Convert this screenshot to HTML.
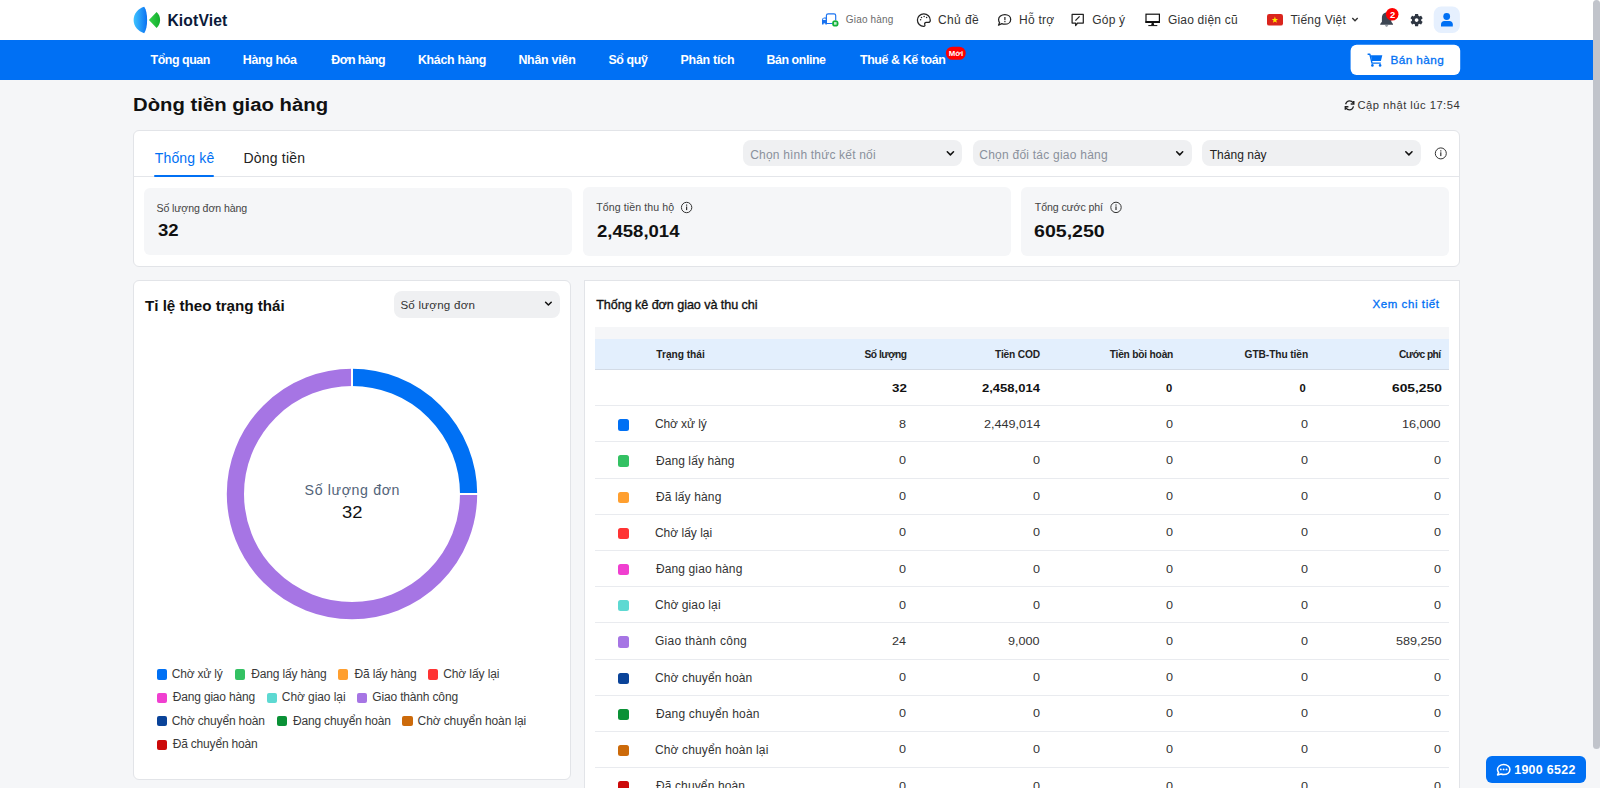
<!DOCTYPE html>
<html><head><meta charset="utf-8"><title>Dòng tiền giao hàng</title>
<style>
html{margin:0;padding:0;width:1600px;height:788px;overflow:hidden;background:#f5f6f8}
body{margin:0;padding:0}
body{width:1600px;height:788px;overflow:hidden;position:relative;background:#f5f6f8;font-family:"Liberation Sans",sans-serif}
.b{position:absolute;box-sizing:border-box}
.t{position:absolute;white-space:nowrap;line-height:40px;font-family:"Liberation Sans",sans-serif}
svg{position:absolute;overflow:visible}
</style></head><body><div style="position:absolute;left:0;top:0;width:1600px;height:788px;overflow:hidden">
<!-- header -->
<div class="b" style="left:0;top:0;width:1600px;height:40px;background:#fff"></div>
<div class="b" style="left:0;top:40px;width:1600px;height:40px;background:#0070f4"></div>
<svg style="left:0;top:0" width="1600" height="80" viewBox="0 0 1600 80">
  <defs>
    <linearGradient id="lg1" x1="0" y1="0" x2="1" y2="0"><stop offset="0" stop-color="#3ec3ff"/><stop offset="1" stop-color="#0a72f2"/></linearGradient>
    <linearGradient id="lg2" x1="0" y1="0" x2="1" y2="0"><stop offset="0" stop-color="#35d34a"/><stop offset="1" stop-color="#12ad2c"/></linearGradient>
  </defs>
  <path d="M144.2,6.8 C138,8.6 133.6,13.8 133.6,20 C133.6,26.2 138,31.4 144.2,33.2 C146.3,30.2 147.1,25.3 147.1,20 C147.1,14.7 146.3,9.8 144.2,6.8 Z" fill="url(#lg1)"/>
  <path d="M148.9,20 L156.6,12.1 C158.9,14.1 160.1,16.9 160.1,20 C160.1,23.1 158.9,25.9 156.6,27.9 Z" fill="url(#lg2)"/>
  <!-- truck -->
  <path d="M826.4,23.5 L826.4,15.6 Q826.4,13.9 828.2,13.9 L834,13.9 Q835.7,13.9 835.7,15.6 L835.7,20.3 M826.4,23.5 L832.2,23.5" fill="none" stroke="#1a73f0" stroke-width="1.15" stroke-linejoin="round"/>
  <path d="M826.9,17.5 L824.2,17.5 Q822,17.7 822,19.9 L822,24.4 L826.9,24.4 Z" fill="#1a73f0"/>
  <rect x="823.1" y="18.6" width="2.6" height="1.4" rx="0.5" fill="#fff"/>
  <circle cx="824.4" cy="24.3" r="1.05" fill="#fff"/>
  <circle cx="835.3" cy="23.4" r="3.2" fill="#14b13a"/>
  <rect x="834" y="22.1" width="2.6" height="2.6" fill="#c6f0cf"/>
  <!-- palette -->
  <path d="M923.8,13.9 C920.2,13.9 917.4,16.7 917.4,20.1 C917.4,23.6 920.2,26.3 923.6,26.3 C925,26.3 925.2,25.4 924.8,24.6 C924.3,23.5 924.9,22.4 926.1,22.4 L928.2,22.4 C929.5,22.4 930.3,21.5 930.3,20.2 C930.3,16.7 927.4,13.9 923.8,13.9 Z" fill="none" stroke="#222" stroke-width="1.25"/>
  <circle cx="921.5" cy="17.4" r="0.75" fill="#222"/><circle cx="924.1" cy="16.5" r="0.75" fill="#222"/><circle cx="926.6" cy="17.4" r="0.75" fill="#222"/><circle cx="920.6" cy="19.8" r="0.75" fill="#222"/>
  <!-- chat ! -->
  <path d="M1004.9,14.6 C1008.2,14.6 1010.7,16.7 1010.7,19.4 C1010.7,22.1 1008.2,24.2 1004.9,24.2 C1003.7,24.2 1002.7,24 1001.8,23.6 L998.5,25.2 L999.6,22.6 C998.9,21.7 998.6,20.6 998.6,19.4 C998.6,16.7 1001.4,14.6 1004.9,14.6 Z" fill="none" stroke="#222" stroke-width="1.25" stroke-linejoin="round"/>
  <rect x="1004.3" y="17" width="1.2" height="3.2" fill="#222"/><rect x="1004.3" y="21" width="1.2" height="1.2" fill="#222"/>
  <!-- feedback -->
  <path d="M1072.1,14.4 L1083.3,14.4 L1083.3,23 L1077.6,23 L1075.6,25.6 L1075.6,23 L1072.1,23 Z" fill="none" stroke="#222" stroke-width="1.25" stroke-linejoin="round"/>
  <path d="M1075.4,20.6 L1079.6,16.4" stroke="#222" stroke-width="1.3"/>
  <!-- monitor -->
  <rect x="1146" y="14.2" width="13.4" height="8.2" fill="none" stroke="#111" stroke-width="1.2"/>
  <rect x="1145.5" y="21" width="14.4" height="1.8" fill="#111"/>
  <path d="M1151.8,22.6 L1153.6,22.6 L1154.2,25 L1151.2,25 Z" fill="#111"/>
  <rect x="1148.3" y="25" width="9" height="1.1" fill="#222"/>
  <!-- flag -->
  <rect x="1267" y="14.1" width="16" height="11.5" rx="2.2" fill="#da251d"/>
  <path d="M1274.9,16.6 L1275.7,19 L1278.1,19 L1276.2,20.5 L1276.9,22.8 L1274.9,21.4 L1272.9,22.8 L1273.6,20.5 L1271.7,19 L1274.1,19 Z" fill="#ffeb00"/>
  <path d="M1352.3,18 L1355,20.8 L1357.7,18" fill="none" stroke="#333" stroke-width="1.4"/>
  <!-- bell -->
  <path d="M1386.6,12.6 C1383.6,12.6 1381.9,15 1381.9,18 L1381.9,21.8 L1380.2,24 L1380.2,24.8 L1393,24.8 L1393,24 L1391.3,21.8 L1391.3,18 C1391.3,15 1389.6,12.6 1386.6,12.6 Z" fill="#3d4653"/>
  <path d="M1384.9,25.6 Q1386.6,27.6 1388.3,25.6 Z" fill="#3d4653"/>
  <circle cx="1392.2" cy="14.2" r="6.3" fill="#ff0000"/>
  <!-- gear -->
  <path transform="translate(1408.9,12.4) scale(0.642)" fill="#2e3642" d="M19.14,12.94c0.04-0.3,0.06-0.61,0.06-0.94c0-0.32-0.02-0.64-0.07-0.94l2.03-1.58c0.18-0.14,0.23-0.41,0.12-0.61 l-1.920-3.32c-0.12-0.22-0.37-0.29-0.59-0.22l-2.39,0.96c-0.5-0.38-1.03-0.7-1.62-0.94L14.4,2.81c-0.04-0.24-0.24-0.41-0.48-0.41 h-3.84c-0.24,0-0.43,0.17-0.47,0.41L9.25,5.35C8.66,5.59,8.12,5.920,7.63,6.29L5.24,5.33c-0.22-0.08-0.47,0-0.59,0.22L2.74,8.87 C2.62,9.08,2.66,9.34,2.86,9.48l2.03,1.58C4.84,11.36,4.8,11.69,4.8,12s0.02,0.64,0.07,0.94l-2.03,1.58 c-0.18,0.14-0.23,0.41-0.12,0.61l1.92,3.32c0.12,0.22,0.37,0.29,0.59,0.22l2.39-0.96c0.5,0.38,1.03,0.7,1.62,0.94l0.36,2.54 c0.05,0.24,0.24,0.41,0.48,0.41h3.84c0.24,0,0.44-0.17,0.47-0.41l0.36-2.54c0.59-0.24,1.13-0.56,1.62-0.94l2.39,0.96 c0.22,0.08,0.47,0,0.59-0.22l1.92-3.32c0.12-0.22,0.07-0.47-0.12-0.61L19.14,12.94z M12,14.9c-1.6,0-2.9-1.3-2.9-2.9 s1.3-2.9,2.9-2.9s2.9,1.3,2.9,2.9S13.6,14.9,12,14.9z"/>
  <!-- avatar -->
  <rect x="1433.7" y="6.6" width="26.2" height="26.3" rx="7.5" fill="#e6f0fe"/>
  <circle cx="1446.7" cy="16.5" r="3.4" fill="#0070f4"/>
  <path d="M1441,26.6 L1441,24.3 C1441,22.4 1442.4,21.1 1444.3,21.1 L1449.5,21.1 C1451.4,21.1 1452.8,22.4 1452.8,24.3 L1452.8,26.6 Z" fill="#0070f4"/>
  <!-- moi badge -->
  <rect x="945.9" y="46.7" width="19.8" height="13.1" rx="6.5" fill="#ff0000"/>
  <!-- ban hang button -->
  <rect x="1350.6" y="44.7" width="109.6" height="30.3" rx="6" fill="#fff"/>
  <path d="M1367.6,54.3 L1369.9,54.3 L1372,63.1 L1380.8,63.1" fill="none" stroke="#0070f4" stroke-width="1.4" stroke-linejoin="round"/>
  <path d="M1370.8,55.3 L1382.3,55.3 L1380.9,61.1 L1372,61.1 Z" fill="#0070f4"/>
  <circle cx="1372.4" cy="65.4" r="1.3" fill="#0070f4"/><circle cx="1380.1" cy="65.4" r="1.3" fill="#0070f4"/>
</svg>
<!-- scrollbar -->
<div class="b" style="left:1593px;top:0;width:7px;height:748.5px;background:#c1c4cb;border-radius:3.5px"></div>
<!-- refresh icon -->
<svg style="left:0;top:0" width="1600" height="788" viewBox="0 0 1600 788">
  <g fill="none" stroke="#222" stroke-width="1.3">
    <path d="M1345.6,104.3 C1346.2,102.2 1348,100.9 1349.6,100.9 C1351.3,100.9 1352.4,101.6 1353.2,102.8"/>
    <path d="M1353.5,106.4 C1352.9,108.5 1351.1,109.8 1349.5,109.8 C1347.8,109.8 1346.7,109.1 1345.9,107.9"/>
  </g>
  <path d="M1354.5,101 L1354.5,104.8 L1350.7,104.8 L1350.7,103.3 L1353,103.3 L1353,101 Z" fill="#222"/>
  <path d="M1344.6,109.7 L1344.6,105.9 L1348.4,105.9 L1348.4,107.4 L1346.1,107.4 L1346.1,109.7 Z" fill="#222"/>
</svg>
<!-- card 1 -->
<div class="b" style="left:133px;top:130px;width:1327px;height:136.5px;background:#fff;border:1px solid #e2e4e8;border-radius:6px"></div>
<div class="b" style="left:134px;top:176px;width:1325px;height:1px;background:#e4e6ea"></div>
<div class="b" style="left:153.6px;top:175px;width:60.2px;height:2px;background:#0070f4;border-radius:1px"></div>
<div class="b" style="left:743.2px;top:140.2px;width:218.9px;height:26.3px;background:#eff0f2;border-radius:8px"></div>
<div class="b" style="left:972.5px;top:140.2px;width:219.1px;height:26.3px;background:#eff0f2;border-radius:8px"></div>
<div class="b" style="left:1201.7px;top:140.2px;width:218.9px;height:26.3px;background:#eff0f2;border-radius:8px"></div>

<div class="b" style="left:144px;top:188.2px;width:428px;height:66.7px;background:#f5f6f8;border-radius:6px"></div>
<div class="b" style="left:582.6px;top:187px;width:428px;height:69px;background:#f5f6f8;border-radius:6px"></div>
<div class="b" style="left:1021.1px;top:187px;width:428px;height:69px;background:#f5f6f8;border-radius:6px"></div>
<!-- left panel -->
<div class="b" style="left:133.4px;top:280.3px;width:437.4px;height:500.2px;background:#fff;border:1px solid #e2e4e8;border-radius:6px"></div>
<div class="b" style="left:394.1px;top:291px;width:165.6px;height:26.6px;background:#eff0f2;border-radius:8px"></div>
<svg style="left:0;top:0" width="1600" height="788" viewBox="0 0 1600 788">
  <g fill="none" stroke-width="17.2">
    <path d="M352,377.4 A116.6,116.6 0 0 1 468.6,494" stroke="#0070f4"/>
    <path d="M468.6,494 A116.6,116.6 0 1 1 352,377.4" stroke="#a675e4"/>
  </g>
  <rect x="351" y="366" width="2" height="22" fill="#fff"/>
  <rect x="458" y="493" width="22" height="2" fill="#fff"/>
</svg>
<!-- right panel -->
<div class="b" style="left:584.2px;top:280.3px;width:875.6px;height:520px;background:#fff;border:1px solid #e2e4e8;border-radius:0"></div>
<div class="b" style="left:595px;top:327.2px;width:854px;height:12px;background:#f5f6f8"></div>
<div class="b" style="left:595px;top:339px;width:854px;height:31px;background:#e3effd;border-bottom:1px solid #d3dbe6"></div>
<div class="b" style="left:595px;top:405px;width:854px;height:1px;background:#e9ebef"></div>
<!-- hotline -->
<div class="b" style="left:1486px;top:756.3px;width:100px;height:26.7px;background:#0070f4;border-radius:6px"></div>
<svg style="left:0;top:0" width="1600" height="788" viewBox="0 0 1600 788">
  <path d="M1503.7,764.5 C1507.3,764.5 1509.9,766.8 1509.9,769.5 C1509.9,772.3 1507.3,774.5 1503.7,774.5 C1502.7,774.5 1501.8,774.3 1501,774 L1497.6,774.9 L1498.6,772.6 C1497.9,771.7 1497.5,770.6 1497.5,769.5 C1497.5,766.8 1500.2,764.5 1503.7,764.5 Z" fill="none" stroke="#fff" stroke-width="1.55" stroke-linejoin="round"/>
  <circle cx="1500.8" cy="769.4" r="0.95" fill="#fff"/><circle cx="1503.6" cy="769.4" r="0.95" fill="#fff"/><circle cx="1506.5" cy="769.4" r="0.95" fill="#fff"/>
</svg>

<!-- overlay icons -->
<svg style="left:0;top:0" width="1600" height="788" viewBox="0 0 1600 788">
  <g fill="none" stroke="#111" stroke-width="1.55" stroke-linecap="round" stroke-linejoin="round">
    <path d="M947.3,151.8 L950.4,154.9 L953.5,151.8"/>
    <path d="M1176.7,151.8 L1179.7,154.9 L1182.7,151.8"/>
    <path d="M1405.8,151.8 L1408.9,154.9 L1412,151.8"/>
    <path d="M545.6,302.2 L548.4,305 L551.2,302.2"/>
  </g>
  <g fill="none" stroke="#333" stroke-width="1">
    <circle cx="1440.8" cy="153.4" r="5.5"/>
    <circle cx="686.6" cy="207.5" r="5.2"/>
    <circle cx="1116" cy="207.4" r="5.2"/>
  </g>
  <g fill="#333">
    <rect x="1440.2" y="152.3" width="1.2" height="3.8"/><rect x="1440.2" y="150.3" width="1.2" height="1.2"/>
    <rect x="686" y="206.5" width="1.2" height="3.6"/><rect x="686" y="204.5" width="1.2" height="1.2"/>
    <rect x="1115.4" y="206.4" width="1.2" height="3.6"/><rect x="1115.4" y="204.4" width="1.2" height="1.2"/>
  </g>
</svg>

<div class="b" style="left:156.5px;top:669.4px;width:10.3px;height:10.3px;background:#0070f4;border-radius:2px"></div><div class="b" style="left:235px;top:669.4px;width:10.3px;height:10.3px;background:#33c163;border-radius:2px"></div><div class="b" style="left:338.1px;top:669.4px;width:10.3px;height:10.3px;background:#ff9f2f;border-radius:2px"></div><div class="b" style="left:427.8px;top:669.4px;width:10.3px;height:10.3px;background:#ff3333;border-radius:2px"></div><div class="b" style="left:156.5px;top:692.8px;width:10.3px;height:10.3px;background:#f03fd0;border-radius:2px"></div><div class="b" style="left:266.5px;top:692.8px;width:10.3px;height:10.3px;background:#5dd9d2;border-radius:2px"></div><div class="b" style="left:356.9px;top:692.8px;width:10.3px;height:10.3px;background:#a675e4;border-radius:2px"></div><div class="b" style="left:156.8px;top:716.1px;width:10.3px;height:10.3px;background:#0a4399;border-radius:2px"></div><div class="b" style="left:276.8px;top:716.1px;width:10.3px;height:10.3px;background:#0a9136;border-radius:2px"></div><div class="b" style="left:402.4px;top:716.1px;width:10.3px;height:10.3px;background:#cc6a0a;border-radius:2px"></div><div class="b" style="left:156.8px;top:739.5px;width:10.3px;height:10.3px;background:#cc0a0a;border-radius:2px"></div><div class="b" style="left:617.8px;top:419.30px;width:11.3px;height:11.3px;background:#0070f4;border-radius:2.5px"></div><div class="b" style="left:595px;top:441.48px;width:854px;height:1px;background:#e9ebef"></div><div class="b" style="left:617.8px;top:455.48px;width:11.3px;height:11.3px;background:#33c163;border-radius:2.5px"></div><div class="b" style="left:595px;top:477.66px;width:854px;height:1px;background:#e9ebef"></div><div class="b" style="left:617.8px;top:491.66px;width:11.3px;height:11.3px;background:#ff9f2f;border-radius:2.5px"></div><div class="b" style="left:595px;top:513.84px;width:854px;height:1px;background:#e9ebef"></div><div class="b" style="left:617.8px;top:527.84px;width:11.3px;height:11.3px;background:#ff3333;border-radius:2.5px"></div><div class="b" style="left:595px;top:550.02px;width:854px;height:1px;background:#e9ebef"></div><div class="b" style="left:617.8px;top:564.02px;width:11.3px;height:11.3px;background:#f03fd0;border-radius:2.5px"></div><div class="b" style="left:595px;top:586.20px;width:854px;height:1px;background:#e9ebef"></div><div class="b" style="left:617.8px;top:600.20px;width:11.3px;height:11.3px;background:#5dd9d2;border-radius:2.5px"></div><div class="b" style="left:595px;top:622.38px;width:854px;height:1px;background:#e9ebef"></div><div class="b" style="left:617.8px;top:636.38px;width:11.3px;height:11.3px;background:#a675e4;border-radius:2.5px"></div><div class="b" style="left:595px;top:658.56px;width:854px;height:1px;background:#e9ebef"></div><div class="b" style="left:617.8px;top:672.56px;width:11.3px;height:11.3px;background:#0a4399;border-radius:2.5px"></div><div class="b" style="left:595px;top:694.74px;width:854px;height:1px;background:#e9ebef"></div><div class="b" style="left:617.8px;top:708.74px;width:11.3px;height:11.3px;background:#0a9136;border-radius:2.5px"></div><div class="b" style="left:595px;top:730.92px;width:854px;height:1px;background:#e9ebef"></div><div class="b" style="left:617.8px;top:744.92px;width:11.3px;height:11.3px;background:#cc6a0a;border-radius:2.5px"></div><div class="b" style="left:595px;top:767.10px;width:854px;height:1px;background:#e9ebef"></div><div class="b" style="left:617.8px;top:781.10px;width:11.3px;height:11.3px;background:#cc0a0a;border-radius:2.5px"></div><div class="b" style="left:595px;top:803.28px;width:854px;height:1px;background:#e9ebef"></div>
<div class="t" style="left:167.40px;top:0.50px;font-size:15.7px;font-weight:700;color:#0b1a3a;letter-spacing:0.129px;">KiotViet</div><div class="t" style="left:845.80px;top:0.20px;font-size:10px;font-weight:400;color:#6b6b6b;letter-spacing:0.175px;">Giao hàng</div><div class="t" style="left:937.90px;top:-0.10px;font-size:12px;font-weight:400;color:#333333;letter-spacing:0.440px;">Chủ đề</div><div class="t" style="left:1019.00px;top:-0.10px;font-size:12px;font-weight:400;color:#333333;letter-spacing:0.240px;">Hỗ trợ</div><div class="t" style="left:1092.30px;top:-0.10px;font-size:12px;font-weight:400;color:#333333;letter-spacing:0.175px;">Góp ý</div><div class="t" style="left:1167.90px;top:-0.10px;font-size:12px;font-weight:400;color:#333333;letter-spacing:0.209px;">Giao diện cũ</div><div class="t" style="left:1290.40px;top:-0.10px;font-size:12px;font-weight:400;color:#333333;letter-spacing:0.233px;">Tiếng Việt</div><div class="t" style="left:1390.00px;top:-5.15px;font-size:9.4px;font-weight:700;color:#ffffff;letter-spacing:0.000px;">2</div><div class="t" style="left:150.60px;top:40.40px;font-size:12.4px;font-weight:700;color:#ffffff;letter-spacing:-0.450px;">Tổng quan</div><div class="t" style="left:242.75px;top:40.40px;font-size:12.4px;font-weight:700;color:#ffffff;letter-spacing:-0.321px;">Hàng hóa</div><div class="t" style="left:331.25px;top:40.40px;font-size:12.4px;font-weight:700;color:#ffffff;letter-spacing:-0.564px;">Đơn hàng</div><div class="t" style="left:417.90px;top:40.40px;font-size:12.4px;font-weight:700;color:#ffffff;letter-spacing:-0.267px;">Khách hàng</div><div class="t" style="left:518.40px;top:40.40px;font-size:12.4px;font-weight:700;color:#ffffff;letter-spacing:-0.237px;">Nhân viên</div><div class="t" style="left:608.50px;top:40.40px;font-size:12.4px;font-weight:700;color:#ffffff;letter-spacing:-0.400px;">Sổ quỹ</div><div class="t" style="left:680.50px;top:40.40px;font-size:12.4px;font-weight:700;color:#ffffff;letter-spacing:-0.225px;">Phân tích</div><div class="t" style="left:766.50px;top:40.40px;font-size:12.4px;font-weight:700;color:#ffffff;letter-spacing:-0.433px;">Bán online</div><div class="t" style="left:860.00px;top:40.40px;font-size:12.4px;font-weight:700;color:#ffffff;letter-spacing:-0.385px;">Thuế & Kế toán</div><div class="t" style="left:948.70px;top:33.60px;font-size:7.8px;font-weight:700;color:#ffffff;letter-spacing:0.150px;">Mới</div><div class="t" style="left:1390.40px;top:40.00px;font-size:11.8px;font-weight:400;color:#0070f4;letter-spacing:0.414px;-webkit-text-stroke:0.3px #0070f4">Bán hàng</div><div class="t" style="left:132.81px;transform:scaleX(1.0860);transform-origin:0 0;top:85.10px;font-size:18.7px;font-weight:700;color:#111111;letter-spacing:0.000px;">Dòng tiền giao hàng</div><div class="t" style="left:1357.50px;top:84.70px;font-size:11.2px;font-weight:400;color:#333333;letter-spacing:0.482px;">Cập nhật lúc 17:54</div><div class="t" style="left:154.75px;top:138.20px;font-size:14px;font-weight:400;color:#0070f4;letter-spacing:0.150px;">Thống kê</div><div class="t" style="left:243.50px;top:138.25px;font-size:14px;font-weight:400;color:#222222;letter-spacing:0.188px;">Dòng tiền</div><div class="t" style="left:750.20px;top:134.70px;font-size:12px;font-weight:400;color:#8a919c;letter-spacing:0.190px;">Chọn hình thức kết nối</div><div class="t" style="left:979.30px;top:134.70px;font-size:12px;font-weight:400;color:#8a919c;letter-spacing:0.233px;">Chọn đối tác giao hàng</div><div class="t" style="left:1209.70px;top:134.70px;font-size:12px;font-weight:400;color:#222222;letter-spacing:0.025px;">Tháng này</div><div class="t" style="left:156.50px;top:188.00px;font-size:10.6px;font-weight:400;color:#444444;letter-spacing:-0.100px;">Số lượng đơn hàng</div><div class="t" style="left:158.40px;transform:scaleX(1.1111);transform-origin:0 0;top:211.30px;font-size:16.7px;font-weight:700;color:#111111;letter-spacing:0.000px;">32</div><div class="t" style="left:596.30px;top:187.20px;font-size:10.6px;font-weight:400;color:#444444;letter-spacing:0.080px;">Tổng tiền thu hộ</div><div class="t" style="left:596.50px;transform:scaleX(1.1108);transform-origin:0 0;top:211.60px;font-size:16.7px;font-weight:700;color:#111111;letter-spacing:0.000px;">2,458,014</div><div class="t" style="left:1034.80px;top:186.90px;font-size:10.6px;font-weight:400;color:#444444;letter-spacing:-0.100px;">Tổng cước phí</div><div class="t" style="left:1033.63px;transform:scaleX(1.1729);transform-origin:0 0;top:211.60px;font-size:16.7px;font-weight:700;color:#111111;letter-spacing:0.000px;">605,250</div><div class="t" style="left:145.00px;top:285.80px;font-size:15.2px;font-weight:700;color:#111111;letter-spacing:-0.020px;">Tỉ lệ theo trạng thái</div><div class="t" style="left:400.40px;top:284.90px;font-size:11.6px;font-weight:400;color:#333333;letter-spacing:0.236px;">Số lượng đơn</div><div class="t" style="left:304.60px;top:470.00px;font-size:14.2px;font-weight:400;color:#536479;letter-spacing:0.618px;">Số lượng đơn</div><div class="t" style="left:341.53px;transform:scaleX(1.1206);transform-origin:0 0;top:492.30px;font-size:16.4px;font-weight:400;color:#111111;letter-spacing:0.000px;">32</div><div class="t" style="left:171.80px;top:653.90px;font-size:12px;font-weight:400;color:#3a3a3a;letter-spacing:-0.213px;">Chờ xử lý</div><div class="t" style="left:251.30px;top:653.90px;font-size:12px;font-weight:400;color:#3a3a3a;letter-spacing:-0.171px;">Đang lấy hàng</div><div class="t" style="left:354.60px;top:653.90px;font-size:12px;font-weight:400;color:#3a3a3a;letter-spacing:-0.200px;">Đã lấy hàng</div><div class="t" style="left:443.20px;top:653.90px;font-size:12px;font-weight:400;color:#3a3a3a;letter-spacing:-0.090px;">Chờ lấy lại</div><div class="t" style="left:172.80px;top:677.30px;font-size:12px;font-weight:400;color:#3a3a3a;letter-spacing:-0.185px;">Đang giao hàng</div><div class="t" style="left:281.80px;top:677.30px;font-size:12px;font-weight:400;color:#3a3a3a;letter-spacing:-0.073px;">Chờ giao lại</div><div class="t" style="left:372.30px;top:677.30px;font-size:12px;font-weight:400;color:#3a3a3a;letter-spacing:-0.164px;">Giao thành công</div><div class="t" style="left:171.70px;top:700.60px;font-size:12px;font-weight:400;color:#3a3a3a;letter-spacing:-0.150px;">Chờ chuyển hoàn</div><div class="t" style="left:293.00px;top:700.60px;font-size:12px;font-weight:400;color:#3a3a3a;letter-spacing:-0.187px;">Đang chuyển hoàn</div><div class="t" style="left:417.60px;top:700.60px;font-size:12px;font-weight:400;color:#3a3a3a;letter-spacing:-0.111px;">Chờ chuyển hoàn lại</div><div class="t" style="left:172.70px;top:724.00px;font-size:12px;font-weight:400;color:#3a3a3a;letter-spacing:-0.185px;">Đã chuyển hoàn</div><div class="t" style="left:596.20px;top:284.90px;font-size:12.6px;font-weight:400;color:#111111;letter-spacing:-0.059px;-webkit-text-stroke:0.35px #111111">Thống kê đơn giao và thu chi</div><div class="t" style="left:1372.40px;top:284.25px;font-size:11.5px;font-weight:400;color:#0070f4;letter-spacing:0.591px;-webkit-text-stroke:0.3px #0070f4">Xem chi tiết</div><div class="t" style="left:656.30px;top:334.80px;font-size:10.2px;font-weight:700;color:#222222;letter-spacing:-0.022px;">Trạng thái</div><div class="t" style="left:864.40px;top:334.80px;font-size:10.2px;font-weight:700;color:#222222;letter-spacing:-0.443px;">Số lượng</div><div class="t" style="left:995.00px;top:334.80px;font-size:10.2px;font-weight:700;color:#222222;letter-spacing:-0.143px;">Tiền COD</div><div class="t" style="left:1109.70px;top:334.80px;font-size:10.2px;font-weight:700;color:#222222;letter-spacing:-0.200px;">Tiền bồi hoàn</div><div class="t" style="left:1244.60px;top:334.80px;font-size:10.2px;font-weight:700;color:#222222;letter-spacing:-0.091px;">GTB-Thu tiền</div><div class="t" style="left:1399.00px;top:334.80px;font-size:10.2px;font-weight:700;color:#222222;letter-spacing:-0.514px;">Cước phí</div><div class="t" style="left:892.00px;transform:scaleX(1.1917);transform-origin:0 0;top:367.70px;font-size:11.2px;font-weight:700;color:#111111;letter-spacing:0.000px;">32</div><div class="t" style="left:981.80px;transform:scaleX(1.1640);transform-origin:0 0;top:367.70px;font-size:11.2px;font-weight:700;color:#111111;letter-spacing:0.000px;">2,458,014</div><div class="t" style="left:1165.90px;top:367.70px;font-size:11.2px;font-weight:700;color:#111111;letter-spacing:0.000px;">0</div><div class="t" style="left:1299.50px;top:367.70px;font-size:11.2px;font-weight:700;color:#111111;letter-spacing:0.000px;">0</div><div class="t" style="left:1392.10px;transform:scaleX(1.2325);transform-origin:0 0;top:367.70px;font-size:11.2px;font-weight:700;color:#111111;letter-spacing:0.000px;">605,250</div><div class="t" style="left:654.90px;top:404.40px;font-size:12px;font-weight:400;color:#333333;letter-spacing:-0.087px;">Chờ xử lý</div><div class="t" style="left:899.28px;transform:scaleX(1.0700);transform-origin:0 0;top:403.80px;font-size:11.8px;font-weight:400;color:#333333;letter-spacing:0.000px;">8</div><div class="t" style="left:983.76px;transform:scaleX(1.0700);transform-origin:0 0;top:403.80px;font-size:11.8px;font-weight:400;color:#333333;letter-spacing:0.000px;">2,449,014</div><div class="t" style="left:1166.28px;transform:scaleX(1.0700);transform-origin:0 0;top:403.80px;font-size:11.8px;font-weight:400;color:#333333;letter-spacing:0.000px;">0</div><div class="t" style="left:1300.58px;transform:scaleX(1.0700);transform-origin:0 0;top:403.80px;font-size:11.8px;font-weight:400;color:#333333;letter-spacing:0.000px;">0</div><div class="t" style="left:1402.28px;transform:scaleX(1.0700);transform-origin:0 0;top:403.80px;font-size:11.8px;font-weight:400;color:#333333;letter-spacing:0.000px;">16,000</div><div class="t" style="left:655.90px;top:440.58px;font-size:12px;font-weight:400;color:#333333;letter-spacing:0.092px;">Đang lấy hàng</div><div class="t" style="left:899.28px;transform:scaleX(1.0700);transform-origin:0 0;top:439.98px;font-size:11.8px;font-weight:400;color:#333333;letter-spacing:0.000px;">0</div><div class="t" style="left:1032.98px;transform:scaleX(1.0700);transform-origin:0 0;top:439.98px;font-size:11.8px;font-weight:400;color:#333333;letter-spacing:0.000px;">0</div><div class="t" style="left:1166.28px;transform:scaleX(1.0700);transform-origin:0 0;top:439.98px;font-size:11.8px;font-weight:400;color:#333333;letter-spacing:0.000px;">0</div><div class="t" style="left:1300.58px;transform:scaleX(1.0700);transform-origin:0 0;top:439.98px;font-size:11.8px;font-weight:400;color:#333333;letter-spacing:0.000px;">0</div><div class="t" style="left:1434.38px;transform:scaleX(1.0700);transform-origin:0 0;top:439.98px;font-size:11.8px;font-weight:400;color:#333333;letter-spacing:0.000px;">0</div><div class="t" style="left:655.90px;top:476.76px;font-size:12px;font-weight:400;color:#333333;letter-spacing:0.140px;">Đã lấy hàng</div><div class="t" style="left:899.28px;transform:scaleX(1.0700);transform-origin:0 0;top:476.16px;font-size:11.8px;font-weight:400;color:#333333;letter-spacing:0.000px;">0</div><div class="t" style="left:1032.98px;transform:scaleX(1.0700);transform-origin:0 0;top:476.16px;font-size:11.8px;font-weight:400;color:#333333;letter-spacing:0.000px;">0</div><div class="t" style="left:1166.28px;transform:scaleX(1.0700);transform-origin:0 0;top:476.16px;font-size:11.8px;font-weight:400;color:#333333;letter-spacing:0.000px;">0</div><div class="t" style="left:1300.58px;transform:scaleX(1.0700);transform-origin:0 0;top:476.16px;font-size:11.8px;font-weight:400;color:#333333;letter-spacing:0.000px;">0</div><div class="t" style="left:1434.38px;transform:scaleX(1.0700);transform-origin:0 0;top:476.16px;font-size:11.8px;font-weight:400;color:#333333;letter-spacing:0.000px;">0</div><div class="t" style="left:654.90px;top:512.94px;font-size:12px;font-weight:400;color:#333333;letter-spacing:0.010px;">Chờ lấy lại</div><div class="t" style="left:899.28px;transform:scaleX(1.0700);transform-origin:0 0;top:512.34px;font-size:11.8px;font-weight:400;color:#333333;letter-spacing:0.000px;">0</div><div class="t" style="left:1032.98px;transform:scaleX(1.0700);transform-origin:0 0;top:512.34px;font-size:11.8px;font-weight:400;color:#333333;letter-spacing:0.000px;">0</div><div class="t" style="left:1166.28px;transform:scaleX(1.0700);transform-origin:0 0;top:512.34px;font-size:11.8px;font-weight:400;color:#333333;letter-spacing:0.000px;">0</div><div class="t" style="left:1300.58px;transform:scaleX(1.0700);transform-origin:0 0;top:512.34px;font-size:11.8px;font-weight:400;color:#333333;letter-spacing:0.000px;">0</div><div class="t" style="left:1434.38px;transform:scaleX(1.0700);transform-origin:0 0;top:512.34px;font-size:11.8px;font-weight:400;color:#333333;letter-spacing:0.000px;">0</div><div class="t" style="left:655.90px;top:549.12px;font-size:12px;font-weight:400;color:#333333;letter-spacing:0.131px;">Đang giao hàng</div><div class="t" style="left:899.28px;transform:scaleX(1.0700);transform-origin:0 0;top:548.52px;font-size:11.8px;font-weight:400;color:#333333;letter-spacing:0.000px;">0</div><div class="t" style="left:1032.98px;transform:scaleX(1.0700);transform-origin:0 0;top:548.52px;font-size:11.8px;font-weight:400;color:#333333;letter-spacing:0.000px;">0</div><div class="t" style="left:1166.28px;transform:scaleX(1.0700);transform-origin:0 0;top:548.52px;font-size:11.8px;font-weight:400;color:#333333;letter-spacing:0.000px;">0</div><div class="t" style="left:1300.58px;transform:scaleX(1.0700);transform-origin:0 0;top:548.52px;font-size:11.8px;font-weight:400;color:#333333;letter-spacing:0.000px;">0</div><div class="t" style="left:1434.38px;transform:scaleX(1.0700);transform-origin:0 0;top:548.52px;font-size:11.8px;font-weight:400;color:#333333;letter-spacing:0.000px;">0</div><div class="t" style="left:654.90px;top:585.30px;font-size:12px;font-weight:400;color:#333333;letter-spacing:0.100px;">Chờ giao lại</div><div class="t" style="left:899.28px;transform:scaleX(1.0700);transform-origin:0 0;top:584.70px;font-size:11.8px;font-weight:400;color:#333333;letter-spacing:0.000px;">0</div><div class="t" style="left:1032.98px;transform:scaleX(1.0700);transform-origin:0 0;top:584.70px;font-size:11.8px;font-weight:400;color:#333333;letter-spacing:0.000px;">0</div><div class="t" style="left:1166.28px;transform:scaleX(1.0700);transform-origin:0 0;top:584.70px;font-size:11.8px;font-weight:400;color:#333333;letter-spacing:0.000px;">0</div><div class="t" style="left:1300.58px;transform:scaleX(1.0700);transform-origin:0 0;top:584.70px;font-size:11.8px;font-weight:400;color:#333333;letter-spacing:0.000px;">0</div><div class="t" style="left:1434.38px;transform:scaleX(1.0700);transform-origin:0 0;top:584.70px;font-size:11.8px;font-weight:400;color:#333333;letter-spacing:0.000px;">0</div><div class="t" style="left:654.90px;top:621.48px;font-size:12px;font-weight:400;color:#333333;letter-spacing:0.271px;">Giao thành công</div><div class="t" style="left:891.79px;transform:scaleX(1.0700);transform-origin:0 0;top:620.88px;font-size:11.8px;font-weight:400;color:#333333;letter-spacing:0.000px;">24</div><div class="t" style="left:1008.37px;transform:scaleX(1.0700);transform-origin:0 0;top:620.88px;font-size:11.8px;font-weight:400;color:#333333;letter-spacing:0.000px;">9,000</div><div class="t" style="left:1166.28px;transform:scaleX(1.0700);transform-origin:0 0;top:620.88px;font-size:11.8px;font-weight:400;color:#333333;letter-spacing:0.000px;">0</div><div class="t" style="left:1300.58px;transform:scaleX(1.0700);transform-origin:0 0;top:620.88px;font-size:11.8px;font-weight:400;color:#333333;letter-spacing:0.000px;">0</div><div class="t" style="left:1395.86px;transform:scaleX(1.0700);transform-origin:0 0;top:620.88px;font-size:11.8px;font-weight:400;color:#333333;letter-spacing:0.000px;">589,250</div><div class="t" style="left:654.90px;top:657.66px;font-size:12px;font-weight:400;color:#333333;letter-spacing:0.150px;">Chờ chuyển hoàn</div><div class="t" style="left:899.28px;transform:scaleX(1.0700);transform-origin:0 0;top:657.06px;font-size:11.8px;font-weight:400;color:#333333;letter-spacing:0.000px;">0</div><div class="t" style="left:1032.98px;transform:scaleX(1.0700);transform-origin:0 0;top:657.06px;font-size:11.8px;font-weight:400;color:#333333;letter-spacing:0.000px;">0</div><div class="t" style="left:1166.28px;transform:scaleX(1.0700);transform-origin:0 0;top:657.06px;font-size:11.8px;font-weight:400;color:#333333;letter-spacing:0.000px;">0</div><div class="t" style="left:1300.58px;transform:scaleX(1.0700);transform-origin:0 0;top:657.06px;font-size:11.8px;font-weight:400;color:#333333;letter-spacing:0.000px;">0</div><div class="t" style="left:1434.38px;transform:scaleX(1.0700);transform-origin:0 0;top:657.06px;font-size:11.8px;font-weight:400;color:#333333;letter-spacing:0.000px;">0</div><div class="t" style="left:655.90px;top:693.84px;font-size:12px;font-weight:400;color:#333333;letter-spacing:0.187px;">Đang chuyển hoàn</div><div class="t" style="left:899.28px;transform:scaleX(1.0700);transform-origin:0 0;top:693.24px;font-size:11.8px;font-weight:400;color:#333333;letter-spacing:0.000px;">0</div><div class="t" style="left:1032.98px;transform:scaleX(1.0700);transform-origin:0 0;top:693.24px;font-size:11.8px;font-weight:400;color:#333333;letter-spacing:0.000px;">0</div><div class="t" style="left:1166.28px;transform:scaleX(1.0700);transform-origin:0 0;top:693.24px;font-size:11.8px;font-weight:400;color:#333333;letter-spacing:0.000px;">0</div><div class="t" style="left:1300.58px;transform:scaleX(1.0700);transform-origin:0 0;top:693.24px;font-size:11.8px;font-weight:400;color:#333333;letter-spacing:0.000px;">0</div><div class="t" style="left:1434.38px;transform:scaleX(1.0700);transform-origin:0 0;top:693.24px;font-size:11.8px;font-weight:400;color:#333333;letter-spacing:0.000px;">0</div><div class="t" style="left:654.90px;top:730.02px;font-size:12px;font-weight:400;color:#333333;letter-spacing:0.156px;">Chờ chuyển hoàn lại</div><div class="t" style="left:899.28px;transform:scaleX(1.0700);transform-origin:0 0;top:729.42px;font-size:11.8px;font-weight:400;color:#333333;letter-spacing:0.000px;">0</div><div class="t" style="left:1032.98px;transform:scaleX(1.0700);transform-origin:0 0;top:729.42px;font-size:11.8px;font-weight:400;color:#333333;letter-spacing:0.000px;">0</div><div class="t" style="left:1166.28px;transform:scaleX(1.0700);transform-origin:0 0;top:729.42px;font-size:11.8px;font-weight:400;color:#333333;letter-spacing:0.000px;">0</div><div class="t" style="left:1300.58px;transform:scaleX(1.0700);transform-origin:0 0;top:729.42px;font-size:11.8px;font-weight:400;color:#333333;letter-spacing:0.000px;">0</div><div class="t" style="left:1434.38px;transform:scaleX(1.0700);transform-origin:0 0;top:729.42px;font-size:11.8px;font-weight:400;color:#333333;letter-spacing:0.000px;">0</div><div class="t" style="left:655.90px;top:766.20px;font-size:12px;font-weight:400;color:#333333;letter-spacing:0.131px;">Đã chuyển hoàn</div><div class="t" style="left:899.28px;transform:scaleX(1.0700);transform-origin:0 0;top:765.60px;font-size:11.8px;font-weight:400;color:#333333;letter-spacing:0.000px;">0</div><div class="t" style="left:1032.98px;transform:scaleX(1.0700);transform-origin:0 0;top:765.60px;font-size:11.8px;font-weight:400;color:#333333;letter-spacing:0.000px;">0</div><div class="t" style="left:1166.28px;transform:scaleX(1.0700);transform-origin:0 0;top:765.60px;font-size:11.8px;font-weight:400;color:#333333;letter-spacing:0.000px;">0</div><div class="t" style="left:1300.58px;transform:scaleX(1.0700);transform-origin:0 0;top:765.60px;font-size:11.8px;font-weight:400;color:#333333;letter-spacing:0.000px;">0</div><div class="t" style="left:1434.38px;transform:scaleX(1.0700);transform-origin:0 0;top:765.60px;font-size:11.8px;font-weight:400;color:#333333;letter-spacing:0.000px;">0</div><div class="t" style="left:1514.20px;top:749.90px;font-size:12.4px;font-weight:700;color:#ffffff;letter-spacing:0.325px;">1900 6522</div>
</div></body></html>
